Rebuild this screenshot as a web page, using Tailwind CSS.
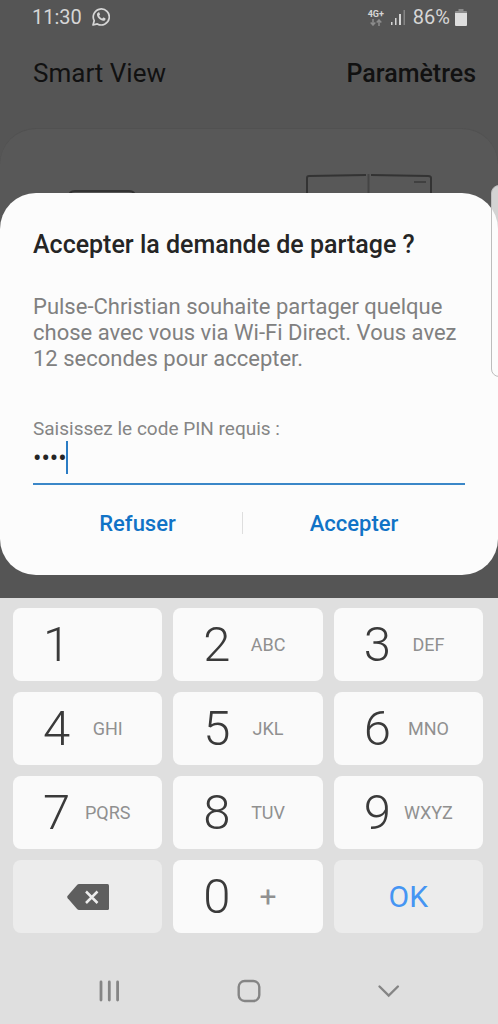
<!DOCTYPE html>
<html lang="fr">
<head>
<meta charset="utf-8">
<meta name="viewport" content="width=device-width, initial-scale=1">
<title>Smart View</title>
<script src="https://cdn.jsdelivr.net/npm/@tailwindcss/browser@4"></script>
</head>
<body class="relative flex min-h-screen flex-col overflow-x-hidden bg-[#555555] font-['Roboto',sans-serif]">

<!-- Status bar -->
<div class="flex h-[34px] items-center justify-between pl-8 pr-[31px] text-xl text-[#d6d6d6]">
  <div class="flex items-center gap-[10px]">
    <span>11:30</span>
    <svg class="size-[18px]" viewBox="0 0 18 18" fill="none" aria-label="WhatsApp">
      <path d="M1 17l1.2-4.3A8 8 0 1 1 5.300 15.900Z" stroke="#d6d6d6" stroke-width="1.700" stroke-linejoin="round"/>
      <path d="M6.200 4.600c.5-.4 1-.3 1.200.2l.6 1.400c.1.300 0 .6-.3.900l-.5.600c.7 1.400 1.700 2.300 3.100 2.900l.7-.8c.2-.3.500-.3.8-.2l1.400.7c.4.200.4.500.3.900-.3 1.200-1.400 1.800-2.500 1.600-3-.6-5.400-2.900-6-5.600-.2-1 .3-2.100 1.200-2.600Z" fill="#d6d6d6"/>
    </svg>
  </div>
  <div class="flex items-center gap-[7px]">
    <div class="flex flex-col items-center">
      <span class="text-[9px] font-bold leading-[10px]">4G+</span>
      <svg class="h-[7px] w-3" viewBox="0 0 12 7" fill="none" stroke="#8c8c8c" stroke-width="1.500" aria-hidden="true">
        <path d="M3 0v6M.7 3.500 3 6l2.300-2.500M9 7V1M6.700 3.500 9 1l2.300 2.500"/>
      </svg>
    </div>
    <svg class="h-4 w-[15px]" viewBox="0 0 15 16" aria-label="Signal">
      <path d="M0 13h1.500v3H0zM4 9h1.500v7H4zM8 5h2v11H8z" fill="#d6d6d6"/>
      <path d="M12.500 1h1.500v15h-1.500z" fill="#858585"/>
    </svg>
    <span>86%</span>
    <svg class="-ml-[2px] h-[17px] w-3" viewBox="0 0 12 17" aria-label="Batterie">
      <path d="M3.500 0h5v2H11q1 0 1 1v2H0V3q0-1 1-1h2.500Z" fill="#8c8c8c"/>
      <path d="M0 4h12v12q0 1-1 1H1q-1 0-1-1Z" fill="#dedede"/>
    </svg>
  </div>
</div>

<!-- App header -->
<header class="flex h-[94px] items-start justify-between pl-[33px] pr-[22px] pt-6 text-[#111111]">
  <h1 class="text-[26px] leading-[30px]">Smart View</h1>
  <a href="#parametres" class="text-[25px] font-medium leading-8">Paramètres</a>
</header>

<main class="flex flex-col">
  <!-- Dimmed device card, partly covered by the dialog -->
  <div class="-mb-9 h-[101px] rounded-t-[36px] border-t border-[#515151] bg-[#585858]">
    <div class="flex items-start justify-between pl-[68px] pr-[65px] pt-[45px]" aria-hidden="true">
      <svg class="mt-4 h-6 w-[68px]" viewBox="0 0 68 24" fill="none" stroke="#333333" stroke-width="2">
        <path d="M1 24V7q0-6 6-6h54q6 0 6 6v17"/>
      </svg>
      <svg class="h-8 w-[128px]" viewBox="0 0 128 32" fill="none" stroke="#333333" stroke-width="2">
        <path d="M2 32V4q0-2 2-2l57-1M66 1l57 1q3 0 3 2v28"/>
        <path d="M63.500 0v32" stroke="#444444" stroke-width="2"/>
        <path d="M109 8h12" stroke="#404040"/>
      </svg>
    </div>
  </div>

  <!-- Share request dialog -->
  <form role="dialog" aria-labelledby="dialog-title" class="relative rounded-[36px] bg-[#fcfcfc] px-[33px] pb-[30px] pt-[37px]">
    <h2 id="dialog-title" class="text-[25px] font-medium leading-[30px] text-[#252525]">Accepter la demande de partage ?</h2>
    <p class="mt-[34px] text-[22px] leading-[26px] text-[#808080]">Pulse-Christian souhaite partager quelque chose avec vous via Wi-Fi Direct. Vous avez 12 secondes pour accepter.</p>
    <label for="pin" class="mt-[45px] block text-[19px] leading-6 text-[#858585]">Saisissez le code PIN requis :</label>
    <div class="relative h-[44px] border-b-2 border-[#3b87c8]">
      <input id="pin" type="password" value="1234" class="block h-9 w-full bg-transparent p-0 text-[25px] text-[#252525] outline-none">
      <span class="absolute left-[33px] top-0 h-[33px] w-[2px] bg-[#2b7cc4]"></span>
    </div>
    <div class="mt-4 flex items-center">
      <button type="button" class="h-11 w-[209px] text-[22px] font-medium text-[#1173c6]">Refuser</button>
      <span class="h-[22px] w-px bg-[#dedede]"></span>
      <button type="submit" class="h-11 flex-1 text-[22px] font-medium text-[#1173c6]">Accepter</button>
    </div>
  </form>
</main>

<!-- Numeric keypad -->
<section aria-label="Clavier numérique" class="mt-[23px] flex flex-1 flex-col bg-[#dfdfdf] pt-[10px]">
  <div class="grid grid-cols-3 gap-[11px] pl-[13px] pr-[15px] text-[49px] font-light text-[#3a3a3a]">
    <button type="button" class="grid h-[73px] grid-cols-2 items-center rounded-lg bg-[#fafafa] pl-[18px] pr-[29px]"><span>1</span></button>
    <button type="button" class="grid h-[73px] grid-cols-2 items-center rounded-lg bg-[#fafafa] pl-[18px] pr-[29px]"><span>2</span><span class="text-lg font-normal text-[#909090]">ABC</span></button>
    <button type="button" class="grid h-[73px] grid-cols-2 items-center rounded-lg bg-[#fafafa] pl-[18px] pr-[29px]"><span>3</span><span class="text-lg font-normal text-[#909090]">DEF</span></button>
    <button type="button" class="grid h-[73px] grid-cols-2 items-center rounded-lg bg-[#fafafa] pl-[18px] pr-[29px]"><span>4</span><span class="text-lg font-normal text-[#909090]">GHI</span></button>
    <button type="button" class="grid h-[73px] grid-cols-2 items-center rounded-lg bg-[#fafafa] pl-[18px] pr-[29px]"><span>5</span><span class="text-lg font-normal text-[#909090]">JKL</span></button>
    <button type="button" class="grid h-[73px] grid-cols-2 items-center rounded-lg bg-[#fafafa] pl-[18px] pr-[29px]"><span>6</span><span class="text-lg font-normal text-[#909090]">MNO</span></button>
    <button type="button" class="grid h-[73px] grid-cols-2 items-center rounded-lg bg-[#fafafa] pl-[18px] pr-[29px]"><span>7</span><span class="text-lg font-normal text-[#909090]">PQRS</span></button>
    <button type="button" class="grid h-[73px] grid-cols-2 items-center rounded-lg bg-[#fafafa] pl-[18px] pr-[29px]"><span>8</span><span class="text-lg font-normal text-[#909090]">TUV</span></button>
    <button type="button" class="grid h-[73px] grid-cols-2 items-center rounded-lg bg-[#fafafa] pl-[18px] pr-[29px]"><span>9</span><span class="text-lg font-normal text-[#909090]">WXYZ</span></button>
    <button type="button" aria-label="Effacer" class="flex h-[73px] items-center justify-center rounded-lg bg-[#ececec]">
      <svg class="h-[26px] w-[42px]" viewBox="0 0 42 26" fill="none" aria-hidden="true">
        <path d="M12 0h28.500Q42 0 42 1.500v23q0 1.500-1.500 1.500H12q-1 0-1.700-.7L.7 14.200q-1-1.200 0-2.400L10.300.7Q11 0 12 0Z" fill="#5e5e5e"/>
        <path d="m19 7.500 11.500 11.500M30.500 7.500 19 19" stroke="#ececec" stroke-width="2.500"/>
      </svg>
    </button>
    <button type="button" class="grid h-[73px] grid-cols-2 items-center rounded-lg bg-[#fafafa] pl-[18px] pr-[29px]"><span>0</span><span class="text-[30px] font-normal text-[#909090]">+</span></button>
    <button type="button" class="h-[73px] rounded-lg bg-[#ececec] text-[30px] font-normal text-[#4595f3]">OK</button>
  </div>

  <!-- System navigation -->
  <nav aria-label="Navigation" class="mt-auto flex h-[66px] items-center justify-between px-[97px]">
    <button type="button" aria-label="Applications récentes">
      <svg class="size-6" viewBox="0 0 24 24" stroke="#858585" stroke-width="2.800" stroke-linecap="round" aria-hidden="true"><path d="M4 3v18M12.300 3v18M20.600 3v18"/></svg>
    </button>
    <button type="button" aria-label="Accueil">
      <svg class="size-6" viewBox="0 0 24 24" fill="none" stroke="#858585" stroke-width="2.400" aria-hidden="true"><rect x="1.700" y="2" width="20.600" height="20" rx="6"/></svg>
    </button>
    <button type="button" aria-label="Masquer le clavier">
      <svg class="size-6" viewBox="0 0 24 24" fill="none" stroke="#858585" stroke-width="2.400" stroke-linecap="round" aria-hidden="true"><path d="m2.500 7.500 9.200 9 9.200-9"/></svg>
    </button>
  </nav>
</section>

<!-- Edge panel handle floating over the screen -->
<div class="absolute -right-1 top-[185px] h-[192px] w-[11px] rounded-l-lg border border-[#bdbdbd] bg-[#fcfcfc]/75"></div>

</body>
</html>
